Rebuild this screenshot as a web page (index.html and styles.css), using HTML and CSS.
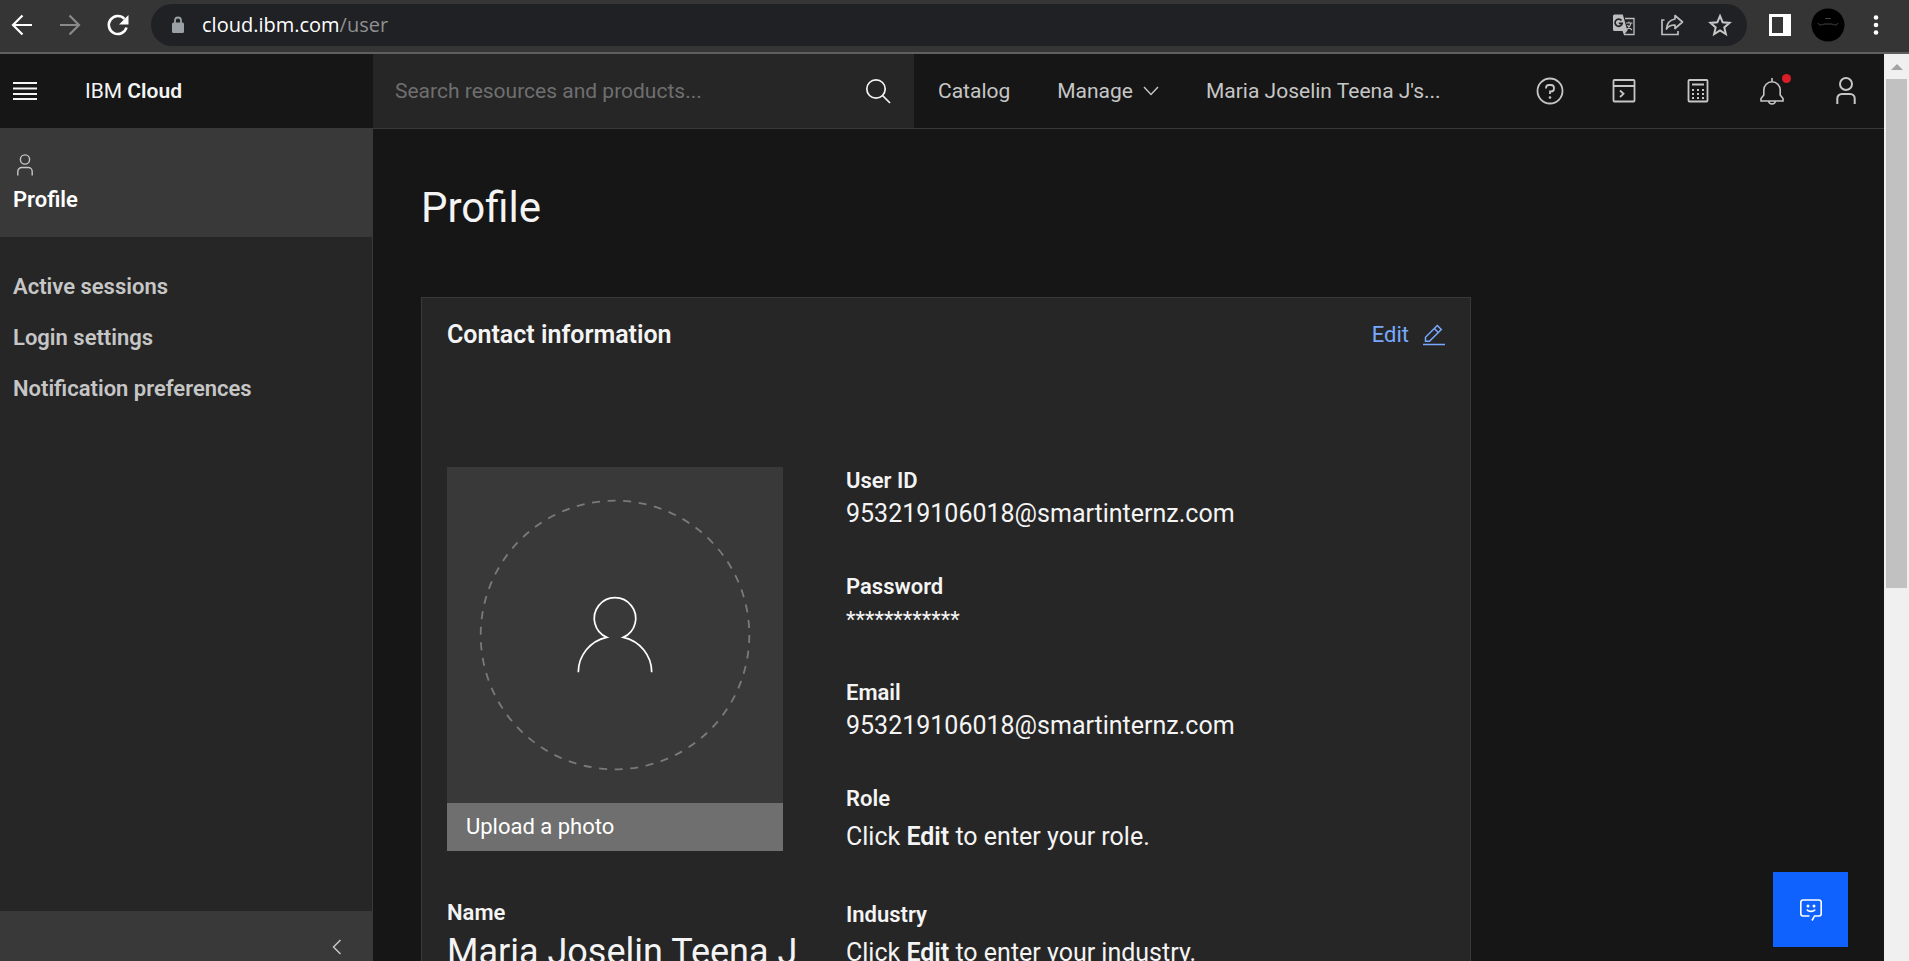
FILE: index.html
```html
<!DOCTYPE html>
<html lang="en">
<head>
<meta charset="utf-8">
<title>Profile - IBM Cloud</title>
<link rel="stylesheet" href="styles.css">
</head>
<body>
<div class="window">
  <div class="toolbar">
    <div class="toolbar-nav">
      <button class="tool" aria-label="Back"><svg width="24" height="24" viewBox="0 0 24 24" fill="none" stroke="#fff" stroke-width="2.2"><path d="M22 12H3M12.500 2.500L3 12l9.500 9.500"/></svg></button>
      <button class="tool" aria-label="Forward"><svg width="24" height="24" viewBox="0 0 24 24" fill="none" stroke="#8a8a8a" stroke-width="2.200"><path d="M2 12h19M11.500 2.500L21 12l-9.500 9.500"/></svg></button>
      <button class="tool" aria-label="Reload"><svg width="24" height="24" viewBox="0 0 24 24" fill="none" stroke="#fff" stroke-width="2.600"><path d="M20.500 14.500A9 9 0 1 1 18.400 5.800"/><path d="M22.500 2v9.500H13z" fill="#fff" stroke="none"/></svg></button>
    </div>
    <div class="omnibox">
      <svg width="14" height="18" viewBox="0 0 14 18"><path d="M4 7V4.500a3 3 0 0 1 6 0V7" fill="none" stroke="#9aa0a6" stroke-width="1.800"/><rect x="1" y="6.500" width="12" height="10.500" rx="1.500" fill="#9aa0a6"/></svg>
      <span class="url">cloud.ibm.com<span class="url-path">/user</span></span>
      <div class="omnibox-actions">
        <button class="tool" aria-label="Translate this page"><svg width="24" height="24" viewBox="0 0 24 24"><path d="M13 5.500h9v16H12" fill="none" stroke="#bdbdbd" stroke-width="1.300"/><path d="M2.500 1.500h8.300l4.700 16.500H2.500A1.500 1.500 0 0 1 1 16.500V3a1.500 1.500 0 0 1 1.500-1.500zM10.500 18h4.500l-3 4z" fill="#bdbdbd"/><path d="M9.500 7.500A3.600 3.600 0 1 0 10.200 10.300H6.800" fill="none" stroke="#202124" stroke-width="1.700"/><path d="M14 10h6.500M17 8.500V10M19 10c-.5 3-2 4.500-4 6.500M15.500 12c1 2 2.500 3.500 4.500 5" fill="none" stroke="#bdbdbd" stroke-width="1.200"/></svg></button>
        <button class="tool" aria-label="Share"><svg width="24" height="24" viewBox="0 0 24 24" fill="none" stroke="#bdbdbd" stroke-width="1.700"><path d="M4.500 7H2v14.500h16V18"/><path d="M15 2.500L22.500 9 15 15.500V12c-4-.2-6.500 1-8.500 4 .5-5.500 3.500-9.200 8.500-10z" stroke-linejoin="round"/></svg></button>
        <button class="tool" aria-label="Bookmark this tab"><svg width="24" height="24" viewBox="0 0 24 24" fill="none" stroke="#c8c8c8" stroke-width="2"><path d="M12 3l2.700 6.300 6.800.6-5.200 4.500 1.600 6.700-5.900-3.600-5.900 3.600 1.600-6.700-5.200-4.500 6.800-.6z"/></svg></button>
      </div>
    </div>
    <div class="toolbar-end">
      <button class="tool" aria-label="Side panel"><svg width="24" height="24" viewBox="0 0 24 24"><path fill="#fff" fill-rule="evenodd" d="M1 1h22v22H1zM4 4v16h11V4z"/></svg></button>
      <button class="avatar" aria-label="Account"><svg width="34" height="34" viewBox="0 0 34 34"><circle cx="17" cy="17" r="16.500" fill="#000"/><path d="M7 15c1 3 4 2 6 1h8c2 1 5 2 6-1M14 10.500h6" fill="none" stroke="#555" stroke-width=".8"/></svg></button>
      <button class="tool" aria-label="Menu"><svg width="24" height="24" viewBox="0 0 24 24" fill="#fff"><circle cx="12" cy="4.500" r="2.300"/><circle cx="12" cy="12" r="2.300"/><circle cx="12" cy="19.500" r="2.300"/></svg></button>
    </div>
  </div>

  <div class="viewport">
    <div class="page">
      <header class="header">
        <div class="brand">
          <button class="icon-btn" aria-label="Open menu"><svg width="24" height="20" viewBox="0 0 24 20" fill="#f4f4f4"><path d="M0 1h24v2H0zM0 6.500h24v2H0zM0 12h24v2H0zM0 17h24v2H0z"/></svg></button>
          <a class="brand-name" href="#">IBM <b>Cloud</b></a>
        </div>
        <div class="search">
          <input class="search-input" type="text" aria-label="Search resources and products" placeholder="Search resources and products...">
          <button class="icon-btn" aria-label="Search"><svg width="26" height="26" viewBox="0 0 26 26" fill="none" stroke="#f4f4f4" stroke-width="1.700"><circle cx="11" cy="11" r="9.200"/><path d="M17.500 17.500L25 25"/></svg></button>
        </div>
        <nav class="header-nav">
          <a href="#">Catalog</a>
          <button class="nav-menu">Manage <svg width="16" height="10" viewBox="0 0 16 10" fill="none" stroke="#c6c6c6" stroke-width="1.400"><path d="M1 1l7 7.500L15 1"/></svg></button>
          <a href="#">Maria Joselin Teena J's...</a>
        </nav>
        <div class="header-actions">
          <button class="action" aria-label="Help"><svg width="28" height="28" viewBox="0 0 28 28" fill="none" stroke="#c6c6c6" stroke-width="1.800"><circle cx="14" cy="14" r="12.500"/><path d="M10 11.500V11a3 3 0 0 1 3-3h2a3 3 0 0 1 3 3v.5a3 3 0 0 1-3 3h-1V17"/><circle cx="14" cy="20.500" r="1.300" fill="#c6c6c6" stroke="none"/></svg></button>
          <button class="action" aria-label="Shell"><svg width="28" height="28" viewBox="0 0 28 28" fill="none" stroke="#c6c6c6" stroke-width="1.800"><rect x="3.500" y="3" width="21" height="21.500" rx="1"/><path d="M3.500 9h21M10 13.500l3.500 3.300L10 20"/></svg></button>
          <button class="action" aria-label="Cost estimator"><svg width="28" height="28" viewBox="0 0 28 28"><rect x="4.500" y="3" width="19" height="21.500" rx="1" fill="none" stroke="#c6c6c6" stroke-width="1.800"/><path fill="#c6c6c6" d="M8 6.500h12v2H8zM8 12h2v2H8zM13 12h2v2h-2zM18 12h2v2h-2zM8 16h2v2H8zM13 16h2v2h-2zM18 16h2v2h-2zM8 20h2v2H8zM13 20h2v2h-2zM18 20h2v2h-2z"/></svg></button>
          <button class="action" aria-label="Notifications"><svg width="28" height="28" viewBox="0 0 28 28" fill="none" stroke="#c6c6c6" stroke-width="1.600"><path d="M14 1v4M3 24v-2.500L5.800 18v-5a8.200 8.200 0 0 1 16.400 0v5L25 21.500V24zM10.500 24c.3 2 1.700 3 3.500 3s3.200-1 3.500-3"/></svg><span class="alert-dot"></span></button>
          <button class="action" aria-label="User account"><svg width="28" height="28" viewBox="0 0 28 28" fill="none" stroke="#c6c6c6" stroke-width="2"><circle cx="14" cy="7" r="6"/><path d="M5.300 27v-5.500A4.500 4.500 0 0 1 9.800 17h8.400a4.500 4.500 0 0 1 4.500 4.500V27"/></svg></button>
        </div>
      </header>

      <div class="body">
        <aside class="sidebar">
          <a class="side-current" href="#">
            <svg width="16" height="22" viewBox="0 0 16 22" fill="none" stroke="#c6c6c6" stroke-width="1.400"><circle cx="8" cy="5.500" r="4.600"/><path d="M.8 21.500v-4a4 4 0 0 1 4-4h6.400a4 4 0 0 1 4 4v4"/></svg>
            <span>Profile</span>
          </a>
          <nav class="side-nav">
            <a href="#">Active sessions</a>
            <a href="#">Login settings</a>
            <a href="#">Notification preferences</a>
          </nav>
          <button class="side-collapse" aria-label="Collapse navigation"><svg width="10" height="16" viewBox="0 0 10 16" fill="none" stroke="#c6c6c6" stroke-width="1.500"><path d="M8.500 1L1.500 8l7 7"/></svg></button>
        </aside>

        <main class="main">
          <h1 class="title">Profile</h1>
          <section class="card">
            <div class="card-head">
              <h2>Contact information</h2>
              <button class="edit">Edit <svg width="22" height="22" viewBox="0 0 22 22" fill="none" stroke="#78a9ff" stroke-width="1.500"><path d="M0 20.500h22M2.500 17.300v-4L14.300 1.500l4 4L6.500 17.300zM11.300 4.500l4 4"/></svg></button>
            </div>
            <div class="card-body">
              <div class="col-photo">
                <div class="photo">
                  <svg class="photo-art" viewBox="0 0 336 336" fill="none"><circle cx="168" cy="168" r="134.300" stroke="#7a7a7a" stroke-width="1.800" stroke-dasharray="8 7.630"/><path d="M131.300 205.300c0-17 12-31.500 28.400-35a20.700 20.700 0 1 1 16.600 0c16.400 3.500 28.400 18 28.400 35" stroke="#fff" stroke-width="1.700"/></svg>
                  <button class="upload">Upload a photo</button>
                </div>
                <dl class="fields">
                  <div class="field">
                    <dt>Name</dt>
                    <dd class="name">Maria Joselin Teena J</dd>
                  </div>
                </dl>
              </div>
              <dl class="fields">
                <div class="field"><dt>User ID</dt><dd>953219106018@smartinternz.com</dd></div>
                <div class="field"><dt>Password</dt><dd class="secret">************</dd></div>
                <div class="field"><dt>Email</dt><dd>953219106018@smartinternz.com</dd></div>
                <div class="field"><dt>Role</dt><dd class="hint">Click <b>Edit</b> to enter your role.</dd></div>
                <div class="field"><dt>Industry</dt><dd class="hint">Click <b>Edit</b> to enter your industry.</dd></div>
              </dl>
            </div>
          </section>
        </main>
      </div>

      <button class="chat" aria-label="Open chat"><svg width="24" height="24" viewBox="0 0 24 24" fill="none" stroke="#fff" stroke-width="1.600"><path d="M10.500 18H4a2.200 2.200 0 0 1-2.200-2.200V4.200A2.200 2.200 0 0 1 4 2h16a2.200 2.200 0 0 1 2.200 2.200v11.600A2.200 2.200 0 0 1 20 18h-4.500L13 22.500M8 11.500c1 2.500 7 2.500 8 0"/><circle cx="9" cy="8" r="1.500" fill="#fff" stroke="none"/><circle cx="15" cy="8" r="1.500" fill="#fff" stroke="none"/></svg></button>
    </div>
    <div class="scrollbar">
      <svg class="scroll-arrow" width="12" height="6" viewBox="0 0 12 6"><path d="M0 6l6-6 6 6z" fill="#a3a3a3"/></svg>
      <div class="scroll-thumb"></div>
    </div>
  </div>
</div>
</body>
</html>
```
FILE: styles.css
```css
* { box-sizing: border-box; }

body {
  margin: 0;
  background: #161616;
  color: #f4f4f4;
  font-family: Roboto, "Liberation Sans", sans-serif;
  font-size: 21px;
  line-height: 28px;
}

button {
  margin: 0;
  padding: 0;
  border: 0;
  background: none;
  color: inherit;
  font: inherit;
  cursor: pointer;
}

a { color: inherit; text-decoration: none; }
svg { display: block; flex: none; }
h1, h2, dl, dd { margin: 0; }
b { font-weight: 600; }

.window {
  display: flex;
  flex-direction: column;
  height: 100vh;
  overflow: hidden;
}

/* Browser toolbar */
.toolbar {
  display: flex;
  align-items: center;
  flex: none;
  padding: 4px 21px 6px 10px;
  border-bottom: 2px solid #5f5f5f;
  background: #353535;
}

.toolbar-nav { display: flex; gap: 24px; width: 141px; }

.omnibox {
  display: flex;
  align-items: center;
  flex: 1;
  height: 42px;
  padding: 0 15px 0 20px;
  border-radius: 21px;
  background: #202124;
}

.url {
  margin-left: 17px;
  color: #fff;
  font-family: "Open Sans", sans-serif;
  font-size: 20px;
}

.url-path { color: #8f9092; }
.omnibox-actions { display: flex; gap: 24px; margin-left: auto; }

.toolbar-end {
  display: flex;
  align-items: center;
  gap: 19px;
  padding-left: 21px;
}

/* Page frame */
.viewport { display: flex; flex: 1; min-height: 0; }

.page {
  display: flex;
  flex-direction: column;
  flex: 1;
  min-width: 0;
}

.scrollbar {
  display: flex;
  flex-direction: column;
  align-items: center;
  width: 25px;
  padding: 10px 2px 4px;
  background: #f0f0f0;
}

.scroll-arrow { margin-bottom: 9px; }

.scroll-thumb {
  width: 100%;
  height: 57%;
  background: #c1c1c1;
}

/* Header */
.header {
  display: flex;
  flex: none;
  height: 75px;
  border-bottom: 1px solid #393939;
  color: #c6c6c6;
}

.brand {
  display: flex;
  align-items: center;
  gap: 48px;
  width: 373px;
  padding-left: 13px;
}

.brand-name { color: #f4f4f4; }

.search {
  display: flex;
  align-items: center;
  width: 541px;
  padding: 0 23px 0 22px;
  background: #262626;
}

.search-input {
  flex: 1;
  min-width: 0;
  padding: 0;
  border: 0;
  outline: 0;
  background: none;
  color: #f4f4f4;
  font: inherit;
}

.search-input::placeholder { color: #6f6f6f; opacity: 1; }

.header-nav {
  display: flex;
  align-items: center;
  gap: 47px;
  padding-left: 24px;
}

.nav-menu { display: flex; align-items: center; gap: 10px; }
.header-actions { display: flex; margin-left: auto; padding-right: 1px; }

.action {
  position: relative;
  display: flex;
  align-items: center;
  justify-content: center;
  width: 74px;
}

.alert-dot {
  position: absolute;
  top: 20px;
  right: 18px;
  width: 9px;
  height: 9px;
  border-radius: 50%;
  background: #da1e28;
}

/* Sidebar */
.body { display: flex; flex: 1; min-height: 0; }

.sidebar {
  display: flex;
  flex-direction: column;
  width: 373px;
  border-right: 1px solid #393939;
  background: #262626;
  color: #c6c6c6;
  font-size: 22px;
  font-weight: 600;
}

.side-current {
  display: flex;
  flex-direction: column;
  gap: 10px;
  padding: 25px 13px 23px;
  background: #393939;
  color: #fff;
}

.side-current svg { margin-left: 4px; }

.side-nav {
  display: flex;
  flex-direction: column;
  gap: 23px;
  padding: 36px 13px;
}

.side-collapse {
  display: flex;
  justify-content: flex-end;
  height: 50px;
  margin-top: auto;
  padding: 28px 30px 0;
  background: #393939;
}

/* Profile content */
.main {
  flex: 1;
  min-width: 0;
  padding: 53px 48px 0;
  overflow: hidden;
}

.title {
  font-size: 42px;
  font-weight: 400;
  line-height: 52px;
}

.card {
  max-width: 1050px;
  margin-top: 63px;
  padding: 21px 25px;
  border: 1px solid #393939;
  background: #262626;
}

.card-head {
  display: flex;
  align-items: center;
  justify-content: space-between;
  line-height: 32px;
}

.card-head h2 { font-size: 25px; font-weight: 600; }

.edit {
  display: flex;
  align-items: center;
  gap: 14px;
  color: #78a9ff;
  font-size: 22px;
}

.card-body { display: flex; gap: 63px; padding-top: 116px; }
.col-photo { width: 336px; white-space: nowrap; }
.photo { margin-bottom: 48px; background: #393939; }
.photo-art { width: 100%; }

.upload {
  width: 100%;
  height: 48px;
  padding: 0 19px;
  background: #6f6f6f;
  color: #fff;
  font-size: 22px;
  text-align: left;
}

.fields { display: flex; flex-direction: column; gap: 40px; }
.field dt { font-size: 22px; font-weight: 600; }
.field dd { font-size: 25px; line-height: 38px; }
.field .name { font-size: 36px; line-height: 50px; }
.field .secret { font-size: 22px; }
.field .hint { line-height: 48px; }

/* Chat launcher */
.chat {
  position: fixed;
  right: 61px;
  bottom: 14px;
  display: flex;
  align-items: center;
  justify-content: center;
  width: 75px;
  height: 75px;
  background: #0f62fe;
}
```
